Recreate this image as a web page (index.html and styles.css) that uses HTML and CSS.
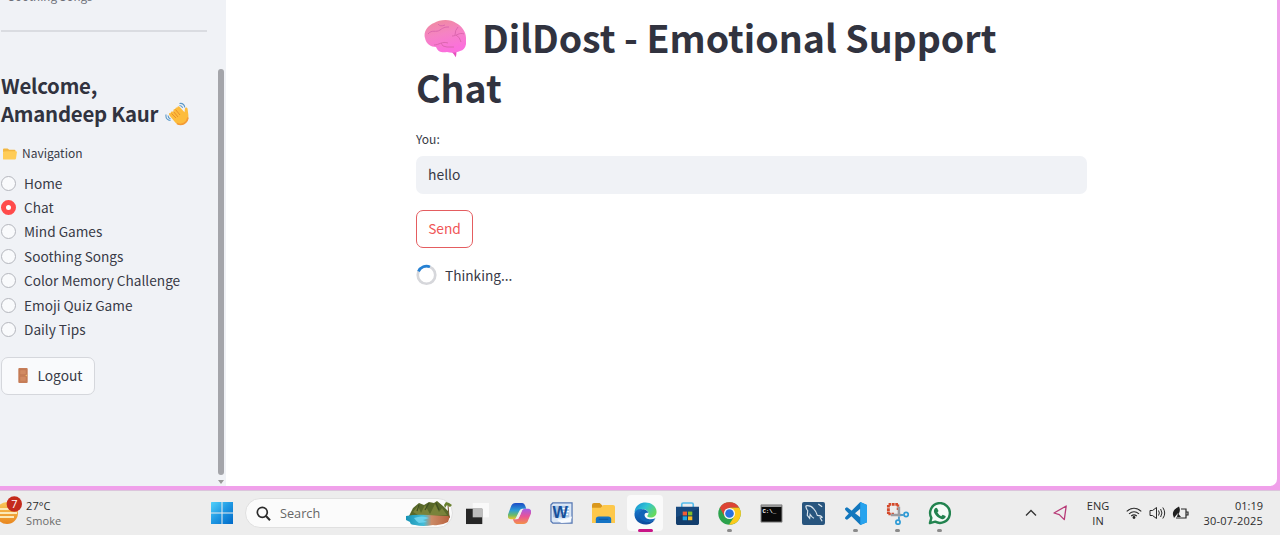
FILE: index.html
```html
<!DOCTYPE html>
<html lang="en">
<head>
<meta charset="utf-8">
<title>DilDost - Emotional Support Chat</title>
<link rel="stylesheet" href="styles.css">
</head>
<body>
<div class="desktop">
  <div class="window">
    <aside class="sidebar">
      <div class="side-content">
        <p class="caption">Soothing Songs</p>
        <hr class="rule">
        <h2 class="welcome">Welcome,<br>Amandeep Kaur
          <svg class="wave" viewBox="0 0 24 24"><path d="M4.500 11c-1.300 1 0 2.500.6 3.300l5 6c2.500 3 7 3.500 10 1.200 3.500-2.500 3.700-6.500 3-10.500l-.5-4c-.2-2-2.500-2-2.700 0l-.4 3.200-5-5.500c-1-1.200-2.600-.2-2 1.100-1.200-1-2.600.2-2 1.500-1.300-.8-2.700.5-1.900 1.900l1 1.400-2-1c-1.300-.6-2.400.4-1.600 1.700z" fill="#fdbc3c"/><path d="M10.500 7.500l4.500 5.500M8.500 9.500l4.500 5.500M6.500 11.500l4.500 4.500" stroke="#e98f2a" stroke-width="1" fill="none"/><path d="M12 21.500c5 2.500 10-.5 11-6" stroke="#f49a35" stroke-width="1.500" fill="none"/><path d="M1 12.500c-.4 3 1 5.500 4.500 6M3 13.500c0 1.800.8 2.800 2.500 3.500M14.500 1.500c2.500-.4 4.800 1 5.300 4M14.500 3.500c1.700 0 2.600.8 3.200 2.200" stroke="#5b98c7" stroke-width="1.100" fill="none"/></svg></h2>
        <p class="nav-title">
          <svg class="folder" viewBox="0 0 14 12"><path d="M0 1.500Q0 .5 1 .5h3.600l1.600 1.300h5.300q1 0 1 1V4H0z" fill="#f2b640"/><path d="M0 11V4.300q0-.7.8-.9L4 3.200h9q1 0 .9 1L13 10.600q-.2.900-1.200.9H.8Q0 11.500 0 11z" fill="#ffcc57"/></svg>
          <span>Navigation</span></p>
        <ul class="nav">
          <li><i class="radio"></i><span>Home</span></li>
          <li><i class="radio on"></i><span>Chat</span></li>
          <li><i class="radio"></i><span>Mind Games</span></li>
          <li><i class="radio"></i><span>Soothing Songs</span></li>
          <li><i class="radio"></i><span>Color Memory Challenge</span></li>
          <li><i class="radio"></i><span>Emoji Quiz Game</span></li>
          <li><i class="radio"></i><span>Daily Tips</span></li>
        </ul>
        <button class="logout"><svg class="door" viewBox="0 0 10 16"><rect width="10" height="16" rx="1" fill="#c67d58"/><path d="M1.800 2h6.400v5H1.800zM1.800 9h6.400v5H1.800z" fill="#d18a62" stroke="#b66e4b" stroke-width=".3"/><circle cx="8.500" cy="8" r=".8" fill="#f0bd62"/></svg><span>Logout</span></button>
      </div>
      <div class="scroll"><div class="thumb"></div><div class="arrow"></div></div>
    </aside>
    <main class="main">
      <h1 class="title"><svg class="brain" viewBox="0 0 42 38"><defs><linearGradient id="br" x1="0" y1="0" x2=".3" y2="1"><stop offset="0" stop-color="#ee8c9a"/><stop offset=".5" stop-color="#f583c3"/><stop offset="1" stop-color="#fb70dc"/></linearGradient></defs><path d="M27 31l3 3.500 1.700 2.800q.8-2 .8-6z" fill="#e64fbe"/><path d="M1 18C-1 12 4 5 10 3 16-1 27-1 32 3c6 3 10 9 10 15 1 7-1 12-6 13-4 2-9 2-13 1-5 1-9 0-11-5-5 0-10-3-11-9z" fill="url(#br)"/><path d="M4 14c4-5 8-1 12-4s6-3 9-3M14 4q2 3 7 1M10 25c5 0 8-4 14-2M17 23q1 4 6 4h7M40 14c-5-2-7 2-12 2M31 15q0-5 3-8M32 15q4 2 5 7" fill="none" stroke="#d964ab" stroke-width=".9"/></svg>DilDost - Emotional Support<br>Chat</h1>
      <label class="label">You:</label>
      <div class="input">hello</div>
      <button class="send"><span>Send</span></button>
      <div class="thinking"><svg class="spinner" viewBox="0 0 22 22"><circle cx="11" cy="11" r="9.200" fill="none" stroke="#d6d7db" stroke-width="2.800"/><path d="M2.600 7.200A9.200 9.200 0 0 1 14.600 2.500" fill="none" stroke="#2581d4" stroke-width="2.800"/></svg><span>Thinking...</span></div>
    </main>
  </div>
</div>
<footer class="taskbar">
  <div class="weather">
    <svg class="sun" viewBox="0 0 24 30"><defs><linearGradient id="sn" x2="0" y2="1"><stop offset="0" stop-color="#f9c95b"/><stop offset="1" stop-color="#e9861e"/></linearGradient></defs><circle cx="7" cy="17" r="11" fill="url(#sn)"/><path d="M0 13h13M0 17h17M0 21h14" stroke="#fbe9b8" stroke-width="1.800"/><circle cx="14.300" cy="8" r="7.700" fill="#c42b1c"/><text x="14.300" y="12" text-anchor="middle" font-size="11" fill="#fff">7</text></svg>
    <div class="temps"><span>27°C</span><span class="dim">Smoke</span></div>
  </div>
  <svg class="start" viewBox="0 0 22 22"><defs><linearGradient id="wn" x2="1" y2="1"><stop offset="0" stop-color="#51d1fb"/><stop offset=".5" stop-color="#1e97e2"/><stop offset="1" stop-color="#0069c8"/></linearGradient></defs><path d="M.5 0H10.500v10.500H0V.5zM11.500 0H22v10.500H11.500zM0 11.500h10.500V22H0zM11.500 11.500H22V22H11.500z" fill="url(#wn)"/></svg>
  <div class="search">
    <svg class="glass" viewBox="0 0 15 15"><circle cx="6.300" cy="6.300" r="5" fill="none" stroke="#2b2b2b" stroke-width="1.700"/><path d="M10 10l4 4.300" stroke="#2b2b2b" stroke-width="2"/></svg>
    <span>Search</span>
    <svg class="island" viewBox="0 0 46 26"><defs><linearGradient id="sea"><stop offset="0" stop-color="#1793b5"/><stop offset=".4" stop-color="#45bdd8"/><stop offset=".58" stop-color="#cb8b67"/><stop offset="1" stop-color="#b9603d"/></linearGradient></defs><path d="M3 16l4-8 6-5 5 2 5-3 5 1 3-2 6 5 5 5 2 7-18-2z" fill="#586829"/><path d="M7 12l5-6 3 7 4-8 5 9 5-10 4 8 3-4 5 7-15 1-14-1z" fill="#79833a"/><path d="M13 5l-2 6M23 3l-4 7M30 3l3 7" stroke="#3f4f22" stroke-width="1.200"/><path d="M0 16q10-2 22-1t22 1l-2 6q-7 4-15 3-10 2-18 0-5 0-5-3l-4-2z" fill="url(#sea)"/><path d="M8 18q8-3 15 0l-6 2 4 2-8 1q-3-2-5-5z" fill="#6bd2ec"/><path d="M42 5l1 12" stroke="#73552a"/><path d="M38 5l2-3 3 1 3 2-2 2-3-2-2 3z" fill="#69812e"/></svg>
  </div>
  <div class="apps">
    <div class="app"><svg viewBox="0 0 24 24"><path d="M7 1h17v15H7z" fill="#f9f9f9"/><path d="M0 7h17v16H0z" fill="#262626"/><path d="M7 7h10v9H7z" fill="#bcbcbc"/></svg></div>
    <div class="app"><svg viewBox="0 0 24 24"><defs><linearGradient id="c1" x2="0" y2="1"><stop offset="0" stop-color="#1b4ac5"/><stop offset=".45" stop-color="#2b9cd6"/><stop offset=".75" stop-color="#6dbb68"/><stop offset="1" stop-color="#f1c52c"/></linearGradient><linearGradient id="c2" x2="0" y2="1"><stop offset="0" stop-color="#a35be8"/><stop offset=".5" stop-color="#e85498"/><stop offset="1" stop-color="#f49147"/></linearGradient></defs><path d="M8 1h7q2 0 3 3l1 3h-4q-2 0-3 3l-2 4q-1 4-4 4H3q-4 0-3-5L3 5q1-4 5-4z" fill="url(#c1)"/><path d="M16 23H9q-2 0-3-3l-1-2h4q2 0 3-3l2-5q1-3 4-3h3q4 0 3 5l-3 7q-1 4-5 4z" fill="url(#c2)"/><path d="M12.500 8l3-1-3 7-2 3.500-3 .5z" fill="#efeded"/></svg></div>
    <div class="app"><svg viewBox="0 0 24 24"><path d="M3 1h20v21H3l-2-2V3z" fill="#dce8f6" stroke="#5577b3" stroke-width="1.300"/><path d="M3 4h17v12H3z" fill="#a9c4e6"/><path d="M12 7h8M12 10h8M12 13h7M8 19h12" stroke="#fff" stroke-width="1.300"/><text class="word" x="2.500" y="17">W</text><path d="M9 20l14-5-2 6-9 1z" fill="#f8fbff"/></svg></div>
    <div class="app"><svg viewBox="0 0 24 24"><path d="M0 3q0-2 2-2h6l3 3v4H0z" fill="#d9971d"/><path d="M0 6h9l3-3h10q2 0 2 2v17H0z" fill="#fdc84b"/><path d="M4 22v-4q0-3 3-3h10q3 0 3 3v4z" fill="#1473c4"/><path d="M7 18h10" stroke="#105698"/></svg></div>
    <div class="app active"><svg viewBox="0 0 24 24"><defs><linearGradient id="e1" x2="1" y2=".6"><stop offset="0" stop-color="#168ad3"/><stop offset=".5" stop-color="#31c4d4"/><stop offset="1" stop-color="#67d95d"/></linearGradient><linearGradient id="e2" x2="0" y2="1"><stop offset="0" stop-color="#1779cd"/><stop offset="1" stop-color="#0c489b"/></linearGradient></defs><path d="M.5 11C1 4 6 .5 12 .5c7 0 12 5 11.500 10.500-.3 4-4 6-8 5-2-.5-2-1.500-1-2.500 2-3-1-6-5-6-4 0-7 1-9 3.500z" fill="url(#e1)"/><path d="M.5 12C1 8 5 6.500 9 7.500c-5 3-3 10 3 12 4 1.500 7 1 10-1.500C19 22.500 16 23.500 12 23.500 5 23.500 0 18 .5 12z" fill="url(#e2)"/><path d="M9 7.500c3 0 6 2 6 4-2-1-4 0-4 2 0 4 6 6 11.500 3.500-2 3.500-7 5-11.500 3C3 17 4 10 9 7.500z" fill="#1264b7"/></svg><b class="mark pink"></b></div>
    <div class="app"><svg viewBox="0 0 24 24"><path d="M6 6V2.500Q6 1 7.500 1h9Q18 1 18 2.500V6" fill="none" stroke="#55bceb" stroke-width="1.700"/><path d="M0 5h24v16q0 3-3 3H3q-3 0-3-3z" fill="#17497f"/><path d="M0 16l24-9v14q0 3-3 3H3q-3 0-3-3z" fill="#123d6c"/><path d="M7 10h4.500v4H7z" fill="#f25b35"/><path d="M12.500 10H17v4h-4.500z" fill="#81bd29"/><path d="M7 15h4.500v4H7z" fill="#20a7e3"/><path d="M12.500 15H17v4h-4.500z" fill="#fdbb24"/></svg></div>
    <div class="app"><svg viewBox="0 0 24 24"><circle cx="12" cy="12" r="11.700" fill="#2ba24c"/><path d="M12 .3A11.700 11.700 0 0 1 22.100 6H12L7 15 1.900 6A11.700 11.700 0 0 1 12 .3z" fill="#dd4435"/><path d="M12 6h10.100A11.700 11.700 0 0 1 11.500 23.700L17 15z" fill="#fbc91b"/><circle cx="12" cy="12" r="5.800" fill="#f8f8f8"/><circle cx="12" cy="12" r="4.500" fill="#2871df"/></svg><b class="mark"></b></div>
    <div class="app"><svg viewBox="0 0 24 24"><path d="M1 3h22v18H1z" fill="#090909" stroke="#969696"/><path d="M1.500 3.500h21v1.500h-21z" fill="#c3c3c3"/><text class="prompt" x="2.500" y="11.500">C:\_</text></svg></div>
    <div class="app"><svg viewBox="0 0 24 24"><rect width="24" height="24" rx="2" fill="#28557e"/><path d="M4 4q5-1 8 3 3 3 4 7 4 0 5 2l-2 .5 2 3.500M4 4q0 3 2 5l-.5 5 2.500 3 .5-4q2 3 4 4M17 2l4 3" fill="none" stroke="#d9e4ec" stroke-width="1.200"/></svg></div>
    <div class="app"><svg viewBox="0 0 24 24"><path d="M17 0l7 3v18l-7 3L2 9Q0 7 2 6q1-1 2 0l13 10V7L4 18q-1 1-2 0-2-1 0-3z" fill="#1277bd"/><path d="M17 0l7 3v18l-7 3V0z" fill="#27a3ee"/></svg><b class="mark"></b></div>
    <div class="app"><svg viewBox="0 0 24 24"><path d="M12.500 2.500h-10v10" fill="none" stroke="#d4492a" stroke-width="3" stroke-dasharray="2.800 .7"/><path d="M12.500 2.500v6M2.500 12.500h6" fill="none" stroke="#d4492a" stroke-width="2.600" stroke-dasharray="2.500 .8"/><path d="M13.500 5v10M5 13.500h11" stroke="#9b9ca0" stroke-width="2.600"/><circle cx="12.500" cy="21" r="2.200" fill="none" stroke="#2d9bd6" stroke-width="1.800"/><circle cx="21" cy="13" r="2.200" fill="none" stroke="#2d9bd6" stroke-width="1.800"/><path d="M13.500 19v-4M15 13.500h4" stroke="#4e9fce" stroke-width="2"/></svg><b class="mark"></b></div>
    <div class="app"><svg viewBox="0 0 24 24"><path d="M2 22l1.500-5.500A10.300 10.300 0 1 1 7.500 20.500z" fill="#f5fbf7" stroke="#22834f" stroke-width="2.500" stroke-linejoin="round"/><path d="M7.500 6.500q1-1 2 0L11 9.300 9.800 11q1.300 2.500 4 3.800l1.500-1.600 2.900 1.300q.6.500-.2 2-1.500 2-4 1.200-5-1.500-7.500-6.500-1-2.700 1-4.700z" fill="#22834f"/></svg><b class="mark"></b></div>
  </div>
  <div class="tray">
    <svg class="chev" viewBox="0 0 12 8"><path d="M1 6.500l5-5 5 5" fill="none" stroke="#333" stroke-width="1.300"/></svg>
    <svg class="plane" viewBox="0 0 15 16"><path d="M13.200 1L1 8l5.300 1.600 5 5z" fill="none" stroke="#b83b78" stroke-width="1.300" stroke-linejoin="round"/></svg>
    <div class="lang"><span>ENG</span><span>IN</span></div>
    <svg class="wifi" viewBox="0 0 16 12"><path d="M.7 4.300q7.300-6 14.600 0M3 6.800q5-4.200 10 0M5.200 9q2.800-2.300 5.600 0" fill="none" stroke="#292929" stroke-width="1.100"/><circle cx="8" cy="10.500" r="1.400" fill="#292929"/></svg>
    <svg class="vol" viewBox="0 0 17 14"><path d="M1 4.500h2.500L7.500 1.500v11l-4-3H1zM9.500 4.500q1.700 2.500 0 5M11.600 3q2.700 4 0 8M13.800 1.500q3.800 5.500 0 11" fill="none" stroke="#292929" stroke-width="1"/></svg>
    <svg class="bat" viewBox="0 0 17 14"><path d="M9 3h5v9H4M14 6h2v3h-2" fill="none" stroke="#292929" stroke-width="1.200"/><path d="M1 9Q0 4 7 .5q2 4-.5 7.500L9 11H5l1-4-4 5z" fill="#202020"/></svg>
    <div class="clock"><span>01:19</span><span class="date">30-07-2025</span></div>
  </div>
</footer>
</body>
</html>
```
FILE: styles.css
```css
* { box-sizing: border-box; }
body { margin: 0; width: 1280px; height: 535px; overflow: hidden; display: flex; flex-direction: column; font-family: "Noto Sans CJK SC", "Noto Sans", sans-serif; color: #383a46; }
p, h1, h2, ul { margin: 0; padding: 0; }
svg { display: block; flex: none; }
.desktop { height: 491px; background: #f0a0ea; border-bottom: 1px solid #dcc5dc; flex: none; }
.window { width: 1277px; height: 486px; background: #fff; border-radius: 0 0 7px 0; display: flex; overflow: hidden; }
.sidebar { width: 226px; background: #f0f2f6; display: flex; justify-content: space-between; flex: none; }
.side-content { width: 207px; padding-left: 1px; }
.caption { margin: -13px 0 0 7px; line-height: 18px; font-size: 11.600px; height: 18px; color: #6d6f78; }
.rule { height: 2px; border: 0; background: #dadce1; margin: 25px 0 0; }
.welcome { font-size: 20.400px; line-height: 28px; font-weight: 700; margin-top: 39px; white-space: nowrap; letter-spacing: -.24px; color: #31333f; }
.wave { display: inline-block; width: 24px; height: 24px; vertical-align: -4px; margin-left: 2px; }
.nav-title { display: flex; align-items: center; gap: 5px; font-size: 12px; height: 20px; margin-top: 16px; padding-left: 2px; }
.folder { width: 14px; height: 12px; margin-top: 1px; }
.nav { list-style: none; margin-top: 8px; font-size: 13.650px; }
.nav li { display: flex; align-items: center; height: 24.400px; gap: 8px; white-space: nowrap; }
.nav span { padding-bottom: 1px; }
.radio { width: 15px; height: 15px; border-radius: 50%; border: 1px solid #b4b6bd; background: #f9fafc; }
.radio.on { border: 5px solid #ff4b4b; background: #fff; }
.logout, .send { font: 13.750px "Noto Sans CJK SC", sans-serif; color: #383a46; height: 38px; border-radius: 7px; display: flex; align-items: center; justify-content: center; padding: 0; }
.logout span, .send span { padding-bottom: 2px; }
.nav-title span { padding-bottom: 1px; }
.logout { margin-top: 15px; width: 94px; gap: 9px; background: #f9fafc; border: 1px solid #d5d7dc; padding-left: 5px; }
.door { width: 10px; height: 15px; }
.scroll { width: 8px; padding-top: 69px; display: flex; flex-direction: column; align-items: center; gap: 5px; margin-right: 1px; }
.thumb { width: 6px; height: 406px; border-radius: 3px; background: #a4a5aa; }
.arrow { border: 3px solid transparent; border-top: 4px solid #999; border-bottom: 0; }
.main { padding: 12px 0 0 190px; width: 861px; }
.title { font-size: 37.500px; line-height: 50px; font-weight: 700; white-space: nowrap; color: #31333f; }
.brain { display: inline-block; width: 42px; height: 38px; margin: 0 16px 0 8px; vertical-align: -5px; }
.label { display: block; font-size: 12px; line-height: 20px; margin-top: 17px; }
.input { margin-top: 7px; height: 38px; border-radius: 7px; background: #f0f2f6; padding-left: 12px; font-size: 13.900px; line-height: 36px; }
.send { width: 57px; margin-top: 16px; border: 1px solid #e45d60; background: #fff; color: #f05557; }
.thinking { display: flex; align-items: center; gap: 8px; margin-top: 16px; height: 22px; font-size: 13.700px; }
.spinner { width: 21px; height: 22px; }
.taskbar { height: 44px; background: #ededed; display: flex; align-items: center; flex: none; font: 11px/15px "Open Sans", sans-serif; color: #2c2c2c; }
.weather { width: 211px; display: flex; align-items: center; gap: 2px; }
.sun { width: 24px; height: 30px; margin-top: -4px; }
.temps, .lang, .clock { display: flex; flex-direction: column; }
.temps { letter-spacing: .1px; }
.dim { color: #6b6b6b; }
.start { width: 22px; height: 22px; }
.search { width: 208px; height: 30px; margin-left: 12px; border-radius: 15px; background: #fbfbfb; border: 1px solid #e0e0e0; display: flex; align-items: center; padding-left: 10px; font-size: 12.700px; color: #666; }
.search span { margin-left: 9px; flex: 1; }
.glass { width: 15px; height: 15px; }
.island { width: 46px; height: 26px; }
.apps { display: flex; margin-left: 3px; height: 44px; align-items: center; }
.app { width: 42px; height: 38px; display: flex; justify-content: center; align-items: center; position: relative; }
.app svg { width: 23px; height: 23px; }
.active::before { content: ""; position: absolute; z-index: -1; inset: 1px 3px; background: #fafafa; border-radius: 4px; }
.active { z-index: 0; }
.mark { position: absolute; bottom: 0; width: 5px; height: 3px; border-radius: 2px; background: #8a8a8a; }
.mark.pink { width: 15px; background: #c91587; }
.word { font: bold 17px "Liberation Sans", sans-serif; fill: #17509a; }
.prompt { font: bold 6px "Liberation Mono", monospace; fill: #fff; }
.tray { display: flex; align-items: center; margin-left: auto; padding-right: 17px; }
.chev { width: 12px; height: 8px; margin-right: 16px; }
.plane { width: 15px; height: 16px; margin-right: 18px; }
.lang { width: 24px; align-items: center; margin-right: 16px; }
.wifi { width: 16px; height: 12px; margin-right: 7px; }
.vol { width: 17px; height: 14px; margin-right: 6px; }
.bat { width: 17px; height: 14px; margin-right: 13px; }
.clock { align-items: flex-end; width: 61px; white-space: nowrap; }
.date { letter-spacing: .2px; }
```
